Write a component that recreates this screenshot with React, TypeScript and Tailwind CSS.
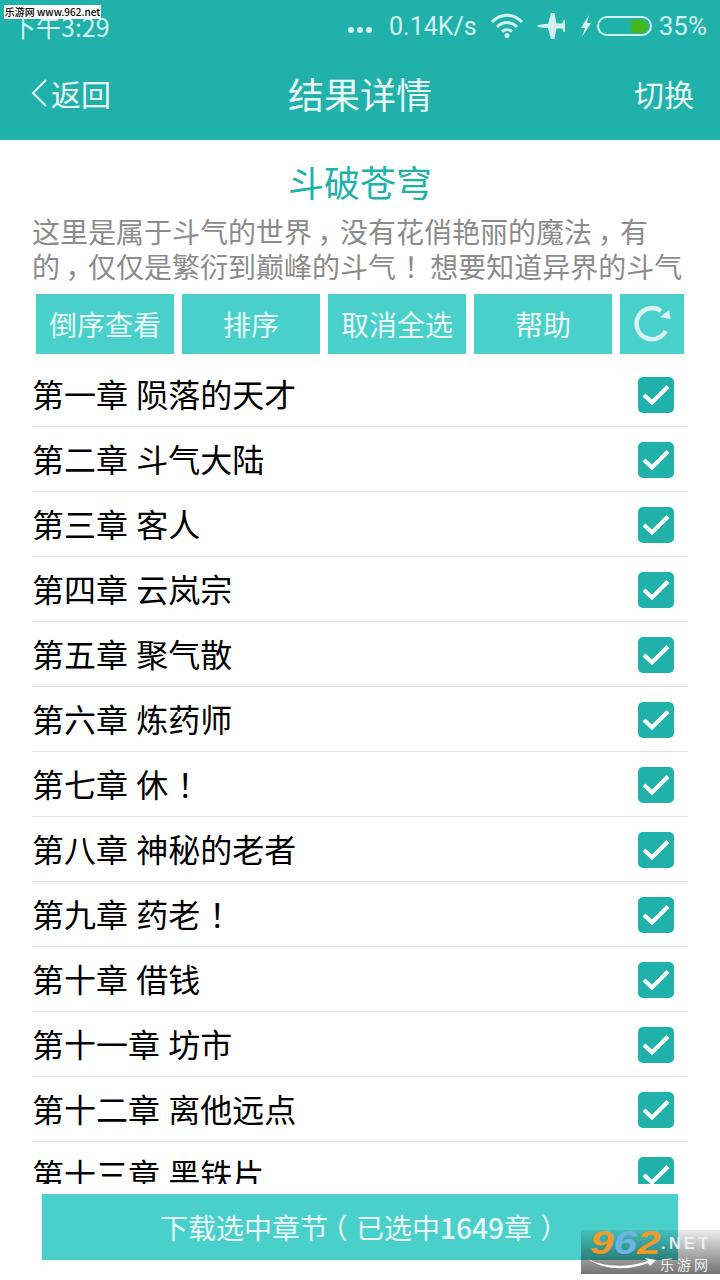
const FONT = '"Noto Sans CJK SC", "Noto Sans", sans-serif';

const ACTIONS = ['倒序查看', '排序', '取消全选', '帮助'];

const CHAPTERS = [
  '第一章 陨落的天才',
  '第二章 斗气大陆',
  '第三章 客人',
  '第四章 云岚宗',
  '第五章 聚气散',
  '第六章 炼药师',
  '第七章 休！',
  '第八章 神秘的老者',
  '第九章 药老！',
  '第十章 借钱',
  '第十一章 坊市',
  '第十二章 离他远点',
  '第十三章 黑铁片',
];

// the screenshot's punctuation sits centred in its box; nudge the SC glyphs over
function Cjk({ text }: { text: string }) {
  return (
    <>
      {text.split(/([，！（）])/).map((part, i) => {
        if (part === '，') return <span key={i} className="relative left-[0.2em]">{part}</span>;
        if (part === '！') return <span key={i} className="relative left-[0.28em]">{part}</span>;
        if (part === '（') return <span key={i} className="relative left-[-0.3em]">{part}</span>;
        if (part === '）') return <span key={i} className="relative left-[0.3em]">{part}</span>;
        return part;
      })}
    </>
  );
}

function StatusIcons() {
  return (
    <div className="flex items-center">
      <svg width="26" height="8" viewBox="0 0 26 8" className="mr-[15px] mt-[8px]">
        <circle cx="3" cy="4" r="3" fill="#d3f1ee" />
        <circle cx="12" cy="4" r="3" fill="#d3f1ee" />
        <circle cx="21" cy="4" r="3" fill="#d3f1ee" />
      </svg>
      <span className="text-[25px] leading-none text-[#d3f1ee]" style={{ fontFamily: 'Roboto, sans-serif' }}>0.14K/s</span>
      <svg width="34" height="26" viewBox="0 0 34 26" fill="none" stroke="#d3f1ee" strokeWidth="3" className="ml-[13px]">
        <path d="M2 9C11 0 23 0 32 9" />
        <path d="M7 14C13 8 21 8 27 14" />
        <path d="M12 18.500C15 16 19 16 22 18.500" />
        <circle cx="17" cy="22.500" r="2.500" fill="#d3f1ee" stroke="none" />
      </svg>
      <svg width="30" height="26" viewBox="0 0 30 26" fill="#d3f1ee" className="ml-[13px]">
        <path d="M0 13C2 11.500 6 11 11 11L14 0H17.500L19.500 10.500H25.500L26.500 7H28V19H26.500L25.500 15.500H19.500L17.500 26H14L11 15C6 15 2 14.500 0 13Z" />
      </svg>
      <svg width="12" height="22" viewBox="0 0 12 22" fill="#d3f1ee" className="ml-[13px]">
        <path d="M9 0 1 13H5L2 22 11 8H7Z" />
      </svg>
      <div className="ml-[5px] flex h-[20px] w-[55px] items-center justify-end rounded-full border-2 border-[#d3f1ee] pr-[2px]">
        <div className="h-[13px] w-[17px] rounded-r-full bg-[#43b81a]" />
      </div>
      <span className="ml-[7px] text-[26px] leading-none text-[#d3f1ee]" style={{ fontFamily: 'Roboto, sans-serif' }}>35%</span>
    </div>
  );
}

function CheckBox() {
  return (
    <div className="flex h-[36px] w-[36px] shrink-0 items-center justify-center rounded-[5px] bg-[#20b2aa]">
      <svg width="28" height="22" viewBox="0 0 28 22" fill="none" stroke="#ffffff" strokeWidth="4">
        <path d="M2 11 10 18.500 26 2.500" />
      </svg>
    </div>
  );
}

function Watermark() {
  return (
    <div className="absolute left-[581px] top-[1230px] h-[44px] w-[139px] overflow-hidden bg-gradient-to-b from-[rgba(0,0,0,0.08)] to-[rgba(0,0,0,0.55)] pl-[9px]" style={{ fontFamily: '"Liberation Sans", sans-serif' }}>
      <div className="flex h-[27px] items-center">
        <div className="w-[71px] shrink-0">
          <span className="inline-block origin-left scale-x-[1.28] text-[33px] font-bold italic leading-none">
            <span className="text-[#f09a2a]">9</span>
            <span className="text-[#6cb4e4]">6</span>
            <span className="text-[#f09a2a]">2</span>
          </span>
        </div>
        <span className="text-[16px] font-bold leading-none tracking-[3.500px] text-[#eeeeee]">.NET</span>
      </div>
      <div className="flex h-[14px] items-center">
        <svg width="68" height="13" viewBox="0 0 68 13" fill="#ffffff" className="ml-[-2px]">
          <path d="M0 1C15 9 40 10 60 3L57 0 68 2 62 8 60 5C40 13 15 12 0 1Z" />
        </svg>
        <span className="ml-[4px] text-[14px] leading-none tracking-[3px] text-[#eeeeee]" style={{ fontFamily: FONT }}>乐游网</span>
      </div>
    </div>
  );
}

export default function App() {
  return (
    <div className="relative flex h-[1280px] w-[720px] flex-col overflow-hidden bg-white" style={{ fontFamily: FONT }}>
      {/* Header */}
      <header className="h-[140px] shrink-0 bg-[#20b2aa]">
        <div className="flex h-[50px] items-center justify-between pl-[11px] pr-[13px] pt-[2px]">
          <span className="text-[25px] leading-none text-[#d3f1ee]">下午3:29</span>
          <StatusIcons />
        </div>
        <div className="flex h-[86px] items-center justify-between pl-[31px] pr-[26px]">
          <div className="flex w-[115px] items-center">
            <svg width="16" height="28" viewBox="0 0 16 28" fill="none" stroke="#e9f8f6" strokeWidth="2" className="mr-[4px]">
              <path d="M15 1 2 14 15 27" />
            </svg>
            <span className="text-[30px] leading-none text-[#e9f8f6]">返回</span>
          </div>
          <span className="text-[36px] leading-none text-[#e9f8f6]">结果详情</span>
          <span className="w-[120px] text-right text-[30px] leading-none text-[#e9f8f6]">切换</span>
        </div>
      </header>

      {/* Book info */}
      <h1 className="mt-[21px] text-center text-[36px] font-normal leading-[40px] text-[#20b2aa]">斗破苍穹</h1>
      <p className="mt-[13px] pl-[32px] pr-[34px] text-[28px] leading-[35px] text-[#8c8c8c]">
        <Cjk text="这里是属于斗气的世界，没有花俏艳丽的魔法，有的，仅仅是繁衍到巅峰的斗气！ 想要知道异界的斗气" />
      </p>

      {/* Actions */}
      <div className="mt-[10px] flex gap-[8px] pl-[36px]">
        {ACTIONS.map((label) => (
          <button key={label} className="flex h-[60px] w-[138px] items-center justify-center bg-[#4ad0ca] text-[28px] text-[#e9f8f6]">
            {label}
          </button>
        ))}
        <button className="flex h-[60px] w-[64px] items-center justify-center bg-[#4ad0ca]">
          <svg width="38" height="38" viewBox="0 0 38 38" fill="none">
            <path d="M32.700 26A15.500 15.500 0 1 1 28 6" stroke="#d6f3f0" strokeWidth="4.500" />
            <path d="M36 5 37.600 14 27 12Z" fill="#d6f3f0" />
          </svg>
        </button>
      </div>

      {/* Chapters */}
      <div className="mt-[8px] min-h-0 flex-1 overflow-hidden px-[32px]">
        {CHAPTERS.map((c) => (
          <div key={c} className="flex h-[65px] items-center justify-between border-b border-[#e0e0e0] pr-[14px] pt-[2px]">
            <span className="pb-[4px] text-[32px] leading-none text-black [word-spacing:1px]"><Cjk text={c} /></span>
            <CheckBox />
          </div>
        ))}
      </div>

      {/* Download */}
      <div className="h-[96px] shrink-0 px-[42px] pt-[10px]">
        <button className="h-[66px] w-[636px] bg-[#4ad0ca] text-[28px] text-[#e9f8f6] shadow-[-1px_0_0_#e5e5e5]">
          <Cjk text="下载选中章节（已选中" /><span className="font-medium">1649</span><Cjk text="章）" />
        </button>
      </div>

      {/* Watermarks */}
      <div className="absolute left-[4px] top-[5px] flex h-[14px] w-[97px] items-center justify-center bg-white text-[10px] font-medium leading-none text-black">
        乐游网 www.962.net
      </div>
      <Watermark />
    </div>
  );
}
